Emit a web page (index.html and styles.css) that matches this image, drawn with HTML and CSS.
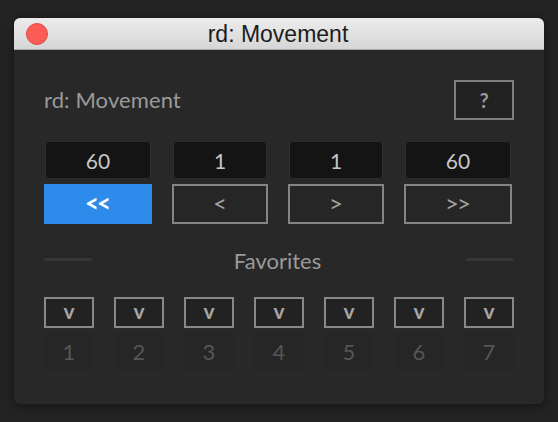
FILE: index.html
```html
<!DOCTYPE html>
<html>
<head>
<meta charset="utf-8">
<link rel="stylesheet" href="styles.css">
</head>
<body>
<div class="window">
  <div class="titlebar">
    <span class="close"></span>
    <span class="title">rd: Movement</span>
  </div>
  <div class="content">
    <div class="header">
      <span class="label">rd: Movement</span>
      <button class="help">?</button>
    </div>
    <div class="controls">
      <div class="field">60</div>
      <div class="field">1</div>
      <div class="field">1</div>
      <div class="field">60</div>
      <button class="btn active">&lt;&lt;</button>
      <button class="btn">&lt;</button>
      <button class="btn">&gt;</button>
      <button class="btn">&gt;&gt;</button>
    </div>
    <div class="fav-head">
      <span class="rule"></span>
      <span class="fav-title">Favorites</span>
      <span class="rule"></span>
    </div>
    <div class="favs">
      <button class="vbtn">v</button>
      <button class="vbtn">v</button>
      <button class="vbtn">v</button>
      <button class="vbtn">v</button>
      <button class="vbtn">v</button>
      <button class="vbtn">v</button>
      <button class="vbtn">v</button>
      <div class="slot">1</div>
      <div class="slot">2</div>
      <div class="slot">3</div>
      <div class="slot">4</div>
      <div class="slot">5</div>
      <div class="slot">6</div>
      <div class="slot">7</div>
    </div>
  </div>
</div>
</body>
</html>
```

FILE: styles.css
```css
* { box-sizing: border-box; }
html, body {
  margin: 0;
  background: #232323;
}
body {
  padding: 18px 14px;
  width: 558px;
  height: 422px;
  font-family: "Lato", "Open Sans", sans-serif;
}
button {
  font-family: inherit;
  margin: 0;
  padding: 0;
}
.window {
  width: 530px;
  height: 386px;
  background: #282828;
  border-radius: 6px;
  box-shadow: 0 0 0 1px #1b1b1b, 0 2px 8px rgba(0,0,0,0.45);
  overflow: hidden;
  display: flex;
  flex-direction: column;
}
.titlebar {
  position: relative;
  height: 32px;
  flex: none;
  background: linear-gradient(#ececec, #d6d6d6);
  border-bottom: 1px solid #a9a9a9;
  display: flex;
  align-items: center;
  justify-content: center;
}
.close {
  position: absolute;
  left: 12px;
  top: 5px;
  width: 22px;
  height: 22px;
  border-radius: 50%;
  background: #fc5c56;
  border: 1px solid #de4b43;
}
.title {
  font-family: "Liberation Sans", Arial, sans-serif;
  font-size: 23px;
  color: #1c1c1c;
  margin-left: -2px;
  margin-top: 1px;
}
.content {
  padding: 30px 30px 0 30px;
  display: flex;
  flex-direction: column;
}
.header {
  height: 40px;
  display: flex;
  align-items: center;
  justify-content: space-between;
}
.label {
  font-size: 22px;
  color: #9a9a9a;
  margin-top: -1px;
  letter-spacing: 0.1px;
}
.help {
  width: 60px;
  height: 40px;
  background: #222;
  border: 2px solid #7e7e7e;
  color: #9a9a9a;
  font-size: 20px;
  font-weight: 700;
}
.controls {
  margin-top: 20px;
  display: grid;
  grid-template-columns: 108px 96px 96px 108px;
  grid-template-rows: 40px 40px;
  column-gap: 20px;
  row-gap: 4px;
}
.field {
  margin: 1px;
  background: #141414;
  border: 1px solid #2f2f2f;
  border-radius: 4px;
  color: #c6c6c6;
  font-size: 21px;
  display: flex;
  align-items: center;
  justify-content: center;
}
.btn {
  background: #262626;
  border: 2px solid #858585;
  color: #a3a3a3;
  font-size: 24px;
  font-weight: 400;
  line-height: 1;
  padding-bottom: 2px;
  letter-spacing: -2px;
  text-indent: -2px;
}
.btn.active {
  background: #2d8ceb;
  border-color: #2d8ceb;
  color: #ffffff;
  font-weight: 700;
}
.fav-head {
  margin-top: 24px;
  height: 24px;
  display: flex;
  align-items: center;
  justify-content: space-between;
}
.rule {
  width: 48px;
  height: 3px;
  border-radius: 2px;
  background: #363636;
  margin-top: -2px;
}
.fav-title {
  font-size: 22px;
  color: #9a9a9a;
  margin-right: 3px;
}
.favs {
  margin-top: 25px;
  display: grid;
  grid-template-columns: repeat(7, 50px);
  grid-template-rows: 31px 37px;
  column-gap: 20px;
  row-gap: 5px;
}
.vbtn {
  background: #222;
  border: 2px solid #888;
  color: #a6a6a6;
  font-size: 21px;
  font-weight: 700;
  line-height: 1;
  padding-bottom: 4px;
}
.slot {
  background: #262626;
  color: #565656;
  font-size: 22px;
  display: flex;
  align-items: center;
  justify-content: center;
}
```
